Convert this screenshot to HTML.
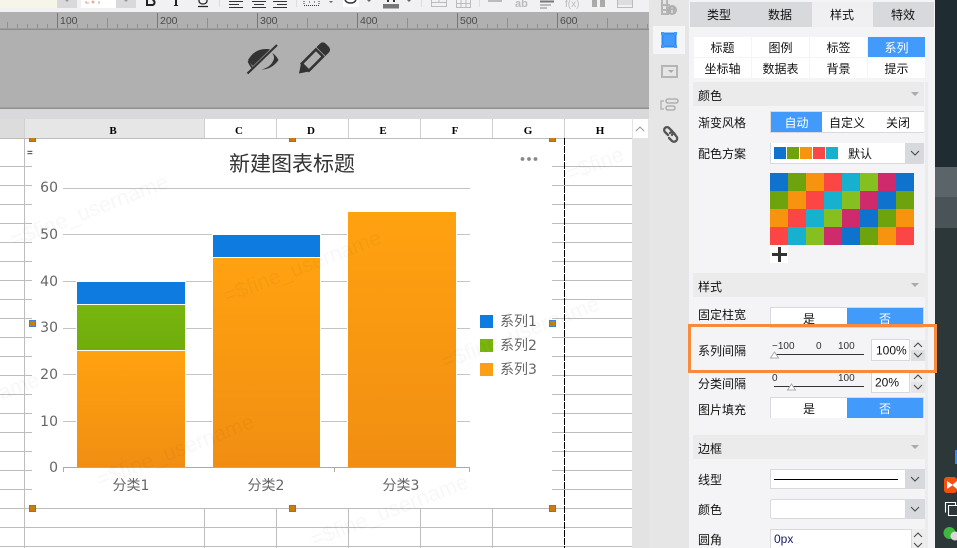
<!DOCTYPE html>
<html><head><meta charset="utf-8"><style>
html,body{margin:0;padding:0;width:957px;height:548px;overflow:hidden;background:#fff}
svg{display:block}
text{font-family:"Liberation Sans","Noto Sans CJK SC",sans-serif}
.c{font-family:"DejaVu Sans","Noto Sans CJK SC",sans-serif;fill:#666}
.p{font-size:12px;fill:#111}
.m{text-anchor:middle}
.h{font-family:"Liberation Serif",serif;font-size:11px;text-anchor:middle;fill:#000;font-weight:bold}
.r{font-family:"Liberation Sans",sans-serif;font-size:10.5px;fill:#4a4a4a}
.s{font-family:"Liberation Sans",sans-serif;font-size:10px;fill:#333}
.w{font-size:21.5px;fill:#000;fill-opacity:.03}
</style></head><body>
<svg width="957" height="548" viewBox="0 0 957 548" xmlns="http://www.w3.org/2000/svg">
<defs>
<linearGradient id="o" x1="0" y1="0" x2="0" y2="1"><stop offset="0" stop-color="#ffa210"/><stop offset="1" stop-color="#f18e12"/></linearGradient>
<linearGradient id="g" x1="0" y1="0" x2="0" y2="1"><stop offset="0" stop-color="#78b50f"/><stop offset="1" stop-color="#6fad0c"/></linearGradient>
</defs>

<!-- toolbar -->
<rect x="0" y="0" width="650" height="12" fill="#f1f1f3"/>
<rect x="0" y="0" width="57" height="8" fill="#f6f6e8"/>
<rect x="57" y="0" width="20" height="8" fill="#d9d9db"/>
<rect x="81" y="0" width="35" height="8" fill="#fff"/>
<rect x="116" y="0" width="20" height="8" fill="#d9d9db"/>
<path d="M65 0h4l-2 2zM124 0h4l-2 2z" fill="#999"/>
<path d="M86 1v2h3M93 1a1 1 0 1 0 .1 0M99 1v3" stroke="#d9a090" fill="none"/>
<path d="M147 0v5h4.500a2.500 2.500 0 0 0 1-5" stroke="#222" stroke-width="2" fill="none"/>
<path d="M176 0v5" stroke="#222" stroke-width="2"/><path d="M174 5.500h4" stroke="#222"/>
<path d="M199 0v1a4 3 0 0 0 8 0V0M198 6.500h10" stroke="#222" stroke-width="1.300" fill="none"/>
<path d="M219.500 0v7" stroke="#ddd"/>
<path d="M229 1.500h14M229 4.500h10M229 7.500h14M252 1.500h14M254 4.500h10M252 7.500h14M273 1.500h14M277 4.500h10M273 7.500h14" stroke="#333" stroke-width="1.100" fill="none"/>
<path d="M296.500 0v7" stroke="#ddd"/>
<path d="M304 5.500h15M304 1v4M319 1v4M309 2h1M314 2h1" stroke="#333" stroke-dasharray="1 1"/>
<path d="M329 1h4l-2 2z" fill="#666"/>
<rect x="343" y="0" width="16" height="7" fill="#fff"/>
<path d="M345 0a6 5 0 0 0 11 0" stroke="#333" stroke-width="1.500" fill="none"/>
<path d="M367 0h4l-2 2zM407 0h4l-2 2z" fill="#666"/>
<path d="M388 0v2M394 0v2" stroke="#333" stroke-width="2"/>
<rect x="383" y="4" width="16" height="4.500" fill="#777"/>
<path d="M421.500 0v7M479.500 0v7" stroke="#ddd"/>
<g stroke="#bbb" fill="none"><path d="M431.500 0v6.500h15V0M431.500 2.500h15M439 0v2"/><path d="M456.500 0v7.500h14V0M456.500 3.500h14M461 0v7M466 0v7"/></g>
<path d="M488 1h14" stroke="#bbb" stroke-width="2"/>
<text x="515" y="7" font-size="11" fill="#bbb" font-weight="bold">ab</text>
<path d="M540 1.500h14" stroke="#777" stroke-width="2"/><path d="M540 5h11M540 8h7" stroke="#bbb" stroke-width="2"/>
<text x="565" y="7" font-size="10" fill="#bbb">f(x)</text>
<path d="M592 0h5v7h-5zM600 0h5v7h-5z" fill="#aaa"/>
<path d="M617.500 0v7.500h15V0" stroke="#bbb" fill="none"/><path d="M618 0h14v5h-14z" fill="#ddd"/>

<!-- ruler and gray band -->
<rect x="0" y="12" width="649" height="96" fill="#b0b0b0"/>
<rect x="0" y="28.500" width="649" height="1.500" fill="#8c8c8c"/>
<rect x="0" y="107.500" width="649" height="1.500" fill="#919191"/>
<path d="M7.500 22v6M17.500 24v4M27.500 24v4M37.500 24v4M47.500 24v4M67.500 24v4M77.500 24v4M87.500 24v4M97.500 24v4M107.500 18v10M117.500 24v4M127.500 24v4M137.500 24v4M147.500 24v4M167.500 24v4M177.500 24v4M187.500 24v4M197.500 24v4M207.500 18v10M217.500 24v4M227.500 24v4M237.500 24v4M247.500 24v4M267.500 24v4M277.500 24v4M287.500 24v4M297.500 24v4M307.500 18v10M317.500 24v4M327.500 24v4M337.500 24v4M347.500 24v4M367.500 24v4M377.500 24v4M387.500 24v4M397.500 24v4M407.500 18v10M417.500 24v4M427.500 24v4M437.500 24v4M447.500 24v4M467.500 24v4M477.500 24v4M487.500 24v4M497.500 24v4M507.500 18v10M517.500 24v4M527.500 24v4M537.500 24v4M547.500 24v4M567.500 24v4M577.500 24v4M587.500 24v4M597.500 24v4M607.500 18v10M617.500 24v4M627.500 24v4M637.500 24v4M647.500 24v4" stroke="#8f8f8f" fill="none"/>
<path d="M57.500 13v15M157.500 13v15M257.500 13v15M357.500 13v15M457.500 13v15M557.500 13v15" stroke="#777" fill="none"/>
<text class="r" x="60" y="24">100</text><text class="r" x="160" y="24">200</text><text class="r" x="260" y="24">300</text><text class="r" x="360" y="24">400</text><text class="r" x="460" y="24">500</text><text class="r" x="560" y="24">600</text>

<!-- eye-off icon -->
<path d="M248 60C252 53 258 49 266 49c1.500 0 3 .2 4 .5L253 66c-2-2-4-4-5-6z" fill="#333"/>
<path d="M248.500 61c1 3 3 6 5 8" fill="none" stroke="#333" stroke-width="1.800"/>
<path d="M272 53c3 1.500 5 4 6.500 7-4 6-10 9.500-17 9.500 6-1.500 11-5 12.500-11 .3-2-.5-4-2-5.500z" fill="#333"/>
<path d="M247.500 73.500L277 45" stroke="#333" stroke-width="2.200" fill="none"/>
<!-- pencil icon -->
<g transform="translate(299 73.500) rotate(-45)">
<path d="M0 0L9-6V6Z" fill="#333"/>
<rect x="9" y="-5" width="20" height="10" fill="none" stroke="#333" stroke-width="2.600"/>
<path d="M31-6.300h5a4 4 0 0 1 4 4v4.600a4 4 0 0 1-4 4h-5z" fill="#333"/>
</g>

<!-- sheet grid -->
<rect x="632" y="119" width="18" height="429" fill="#e3e3e3"/>
<path d="M0 138.500h632M0 166.500h632M0 185.500h632M0 204.500h632M0 223.500h632M0 242.500h632M0 261.500h632M0 280.500h632M0 299.500h632M0 318.500h632M0 337.500h632M0 356.500h632M0 375.500h632M0 394.500h632M0 413.500h632M0 432.500h632M0 451.500h632M0 470.500h632M0 489.500h632M0 508.500h632M0 527.500h632M0 546.500h632" stroke="#bdbdbd" fill="none"/>
<path d="M24.500 138v410" stroke="#bdbdbd"/>
<!-- chart bg -->
<rect x="32" y="139" width="520" height="369" fill="#fff"/>
<path d="M204.500 508v40M276.500 508v40M348.500 508v40M420.500 508v40M492.500 508v40" stroke="#bdbdbd" fill="none"/>
<path d="M564.500 138v410" stroke="#000" stroke-dasharray="7 1"/>
<text x="27" y="156" font-size="10" fill="#000" font-family="Liberation Mono">=</text>

<!-- chart -->
<text x="292" y="171" font-size="21" fill="#333" class="m">新建图表标题</text>
<circle cx="522.500" cy="159" r="1.900" fill="#888"/><circle cx="529" cy="159" r="1.900" fill="#888"/><circle cx="535.500" cy="159" r="1.900" fill="#888"/>
<path d="M63 188.500h407M63 234.500h407M63 281.500h407M63 328.500h407M63 374.500h407M63 421.500h407" stroke="#c4c4c4" fill="none"/>
<g font-size="14" text-anchor="end">
<text class="c" x="58" y="192">60</text><text class="c" x="58" y="239">50</text><text class="c" x="58" y="286">40</text><text class="c" x="58" y="332">30</text><text class="c" x="58" y="379">20</text><text class="c" x="58" y="426">10</text><text class="c" x="58" y="472">0</text>
</g>
<rect x="76" y="281" width="110" height="187" fill="#fff"/><rect x="212" y="234" width="109" height="234" fill="#fff"/><rect x="347" y="211" width="110" height="257" fill="#fff"/>
<rect x="77" y="282" width="108" height="22" fill="#0e7be0"/>
<rect x="77" y="305" width="108" height="45" fill="url(#g)"/>
<rect x="77" y="351" width="108" height="116" fill="url(#o)"/>
<rect x="213" y="235" width="107" height="22" fill="#0e7be0"/>
<rect x="213" y="258" width="107" height="209" fill="url(#o)"/>
<rect x="348" y="212" width="108" height="255" fill="url(#o)"/>
<path d="M63 467.500h407M63.500 467v5M334.500 467v5M469.500 467v5" stroke="#aaa" fill="none"/>
<g font-size="14" text-anchor="middle"><text class="c" x="131" y="490">分类1</text><text class="c" x="266" y="490">分类2</text><text class="c" x="401" y="490">分类3</text></g>
<rect x="480" y="315" width="13" height="13" fill="#0e7be0"/><rect x="480" y="339" width="13" height="13" fill="#78b50f"/><rect x="480" y="363" width="13" height="13" fill="#fd9f12"/>
<g font-size="14"><text class="c" x="500" y="326">系列1</text><text class="c" x="500" y="350">系列2</text><text class="c" x="500" y="374">系列3</text></g>

<!-- handles -->
<g fill="#c97d10" stroke="#3f80d8">
<rect x="29.500" y="135.500" width="6" height="6"/><rect x="289.500" y="135.500" width="6" height="6"/><rect x="549.500" y="135.500" width="6" height="6"/>
<rect x="29.500" y="320.500" width="6" height="6"/><rect x="549.500" y="320.500" width="6" height="6"/>
<rect x="29.500" y="505.500" width="6" height="6"/><rect x="289.500" y="505.500" width="6" height="6"/><rect x="549.500" y="505.500" width="6" height="6"/>
</g>

<!-- watermarks -->
<text class="w" transform="translate(14 247) rotate(-21)">=$fine_username</text>
<text class="w" transform="translate(227 303) rotate(-21)">=$fine_username</text>
<text class="w" transform="translate(570 181) rotate(-21)">=$fine</text>
<text class="w" transform="translate(100 487) rotate(-21)">=$fine_username</text>
<text class="w" transform="translate(314 547) rotate(-21)">=$fine_username</text>
<text class="w" transform="translate(445 369) rotate(-21)">=$fine_username</text>
<text class="w" transform="translate(-115 445) rotate(-21)">=$fine_username</text>

<!-- strip + headers (over the handles) -->
<rect x="0" y="109" width="649" height="10" fill="#d9d9db"/>
<rect x="0" y="119" width="632" height="19" fill="#fff"/>
<rect x="0" y="119" width="24" height="19" fill="#dcdcdc"/>
<rect x="25" y="119" width="179" height="19" fill="#e6e6e6"/>
<path d="M24.500 119v19M204.500 119v19M276.500 119v19M348.500 119v19M420.500 119v19M492.500 119v19M564.500 119v19" stroke="#d0d0d0" fill="none"/>
<text class="h" x="113" y="134">B</text><text class="h" x="239" y="134">C</text><text class="h" x="311" y="134">D</text><text class="h" x="383" y="134">E</text><text class="h" x="455" y="134">F</text><text class="h" x="528" y="134">G</text><text class="h" x="600" y="134">H</text>
<rect x="633" y="119" width="15" height="19" fill="#fff"/>
<path d="M636 131l4-4 4 4" stroke="#999" fill="none"/>

<!-- icon bar -->
<rect x="649" y="0" width="40" height="548" fill="#e6e6e6"/>
<rect x="653" y="26" width="32" height="28" fill="#f5f5f7"/>
<g fill="none" stroke="#b5b5b5" stroke-width="2">
<path d="M662 0v14h7M662 5h8M662 10h6M667 0v14"/>
<path d="M662 66h15v11h-15z"/>
</g>
<circle cx="672" cy="10" r="5" fill="#b0b0b0"/><path d="M672 7.500v1M672 10v3" stroke="#e6e6e6" stroke-width="1.400"/>
<path d="M668 70h6l-3 3z" fill="#aaa"/>
<rect x="662.500" y="33.500" width="13" height="13" fill="#429bfb" stroke="#2f8cf5" stroke-width="2"/>
<g fill="#429bfb"><rect x="661" y="32" width="3" height="3"/><rect x="674" y="32" width="3" height="3"/><rect x="661" y="45" width="3" height="3"/><rect x="674" y="45" width="3" height="3"/></g>
<path d="M664 101h-3v8h3" fill="none" stroke="#b5b5b5" stroke-width="1.500"/>
<rect x="666" y="99" width="12" height="4" rx="2" fill="none" stroke="#b0b0b0" stroke-width="1.600"/>
<rect x="666" y="106" width="9" height="4" rx="2" fill="none" stroke="#b0b0b0" stroke-width="1.600"/>
<g fill="none" stroke="#555" stroke-width="2.300" stroke-linecap="round">
<path d="M668 135l-3-3a2.800 2.800 0 0 1 4-4l3 3a2.800 2.800 0 0 1 0 4"/>
<path d="M670 133a2.800 2.800 0 0 1 4 0l2 3a2.800 2.800 0 0 1-4 5l-3-3"/>
</g>

<!-- panel -->
<rect x="689" y="0" width="246" height="548" fill="#f4f4f6"/>
<rect x="690" y="2" width="244" height="25" fill="#d8d9dc"/>
<rect x="812" y="2" width="61" height="25" fill="#f0f0f2"/>
<text class="p m" x="719" y="19">类型</text><text class="p m" x="780" y="19">数据</text><text class="p m" x="842" y="19">样式</text><text class="p m" x="903" y="19">特效</text>
<g fill="#fff"><rect x="694" y="37" width="57" height="20"/><rect x="752" y="37" width="57" height="20"/><rect x="810" y="37" width="57" height="20"/><rect x="694" y="58" width="57" height="20"/><rect x="752" y="58" width="57" height="20"/><rect x="810" y="58" width="57" height="20"/><rect x="868" y="58" width="57" height="20"/></g>
<rect x="868" y="37" width="57" height="20" fill="#429bfb"/>
<text class="p m" x="722.500" y="52">标题</text><text class="p m" x="780.500" y="52">图例</text><text class="p m" x="838.500" y="52">标签</text><text class="m" x="896.500" y="52" font-size="12" fill="#fff">系列</text>
<text class="p m" x="722.500" y="73">坐标轴</text><text class="p m" x="780.500" y="73">数据表</text><text class="p m" x="838.500" y="73">背景</text><text class="p m" x="896.500" y="73">提示</text>
<rect x="925" y="82" width="3" height="466" fill="#ececee"/>

<!-- color section -->
<rect x="693" y="82" width="231" height="24" fill="#ebebeb"/>
<text class="p" x="698" y="100">颜色</text>
<path d="M911 92h8l-4 4z" fill="#aaa"/>
<text class="p" x="698" y="127">渐变风格</text>
<rect x="770" y="111" width="154" height="22" fill="#d8d9dc"/>
<rect x="771" y="112" width="153" height="20" fill="#fff"/>
<rect x="771" y="112" width="51" height="20" fill="#429bfb"/>
<text class="m" x="796.500" y="127" font-size="12" fill="#fff">自动</text>
<text class="p m" x="847" y="127">自定义</text><text class="p m" x="898" y="127">关闭</text>
<text class="p" x="698" y="158">配色方案</text>
<rect x="770" y="143" width="154" height="20" fill="#fff"/>
<path d="M770.500 143v20.500h153" stroke="#d8d9dc" fill="none"/>
<rect x="905" y="143" width="19" height="20" fill="#d8d9dc"/>
<path d="M911 151l4 4 4-4" stroke="#444" fill="none"/>
<rect x="774" y="147" width="12" height="12" fill="#0f72cc"/><rect x="787" y="147" width="12" height="12" fill="#6fa30e"/><rect x="800" y="147" width="12" height="12" fill="#f8930f"/><rect x="813" y="147" width="12" height="12" fill="#fc4646"/><rect x="826" y="147" width="12" height="12" fill="#17b0cf"/>
<text class="p" x="848" y="158">默认</text>

<!-- palette -->
<g>
<rect x="770" y="173" width="18" height="18" fill="#0f72cc"/><rect x="788" y="173" width="18" height="18" fill="#6fa30e"/><rect x="806" y="173" width="18" height="18" fill="#f8930f"/><rect x="824" y="173" width="18" height="18" fill="#fc4646"/><rect x="842" y="173" width="18" height="18" fill="#17b0cf"/><rect x="860" y="173" width="18" height="18" fill="#86c020"/><rect x="878" y="173" width="18" height="18" fill="#cf2a6c"/><rect x="896" y="173" width="18" height="18" fill="#0f72cc"/>
<rect x="770" y="191" width="18" height="18" fill="#6fa30e"/><rect x="788" y="191" width="18" height="18" fill="#f8930f"/><rect x="806" y="191" width="18" height="18" fill="#fc4646"/><rect x="824" y="191" width="18" height="18" fill="#17b0cf"/><rect x="842" y="191" width="18" height="18" fill="#86c020"/><rect x="860" y="191" width="18" height="18" fill="#cf2a6c"/><rect x="878" y="191" width="18" height="18" fill="#0f72cc"/><rect x="896" y="191" width="18" height="18" fill="#6fa30e"/>
<rect x="770" y="209" width="18" height="18" fill="#f8930f"/><rect x="788" y="209" width="18" height="18" fill="#fc4646"/><rect x="806" y="209" width="18" height="18" fill="#17b0cf"/><rect x="824" y="209" width="18" height="18" fill="#86c020"/><rect x="842" y="209" width="18" height="18" fill="#cf2a6c"/><rect x="860" y="209" width="18" height="18" fill="#0f72cc"/><rect x="878" y="209" width="18" height="18" fill="#6fa30e"/><rect x="896" y="209" width="18" height="18" fill="#f8930f"/>
<rect x="770" y="227" width="18" height="18" fill="#fc4646"/><rect x="788" y="227" width="18" height="18" fill="#17b0cf"/><rect x="806" y="227" width="18" height="18" fill="#86c020"/><rect x="824" y="227" width="18" height="18" fill="#cf2a6c"/><rect x="842" y="227" width="18" height="18" fill="#0f72cc"/><rect x="860" y="227" width="18" height="18" fill="#6fa30e"/><rect x="878" y="227" width="18" height="18" fill="#f8930f"/><rect x="896" y="227" width="18" height="18" fill="#fc4646"/>
</g>
<rect x="770" y="245" width="18" height="18" fill="#fff"/>
<path d="M772 254.500h15M779.500 247v15" stroke="#333" stroke-width="3"/>

<!-- style section -->
<rect x="693" y="273" width="232" height="24" fill="#ebebeb"/>
<text class="p" x="698" y="291">样式</text>
<path d="M911 283h8l-4 4z" fill="#aaa"/>
<text class="p" x="698" y="319">固定柱宽</text>
<rect x="770" y="307" width="154" height="21" fill="#d8d9dc"/>
<rect x="771" y="308" width="76" height="19" fill="#fff"/>
<rect x="847" y="308" width="76" height="19" fill="#429bfb"/>
<text class="p m" x="809" y="323">是</text><text class="m" x="885" y="323" font-size="12" fill="#fff">否</text>

<text class="p" x="698" y="355">系列间隔</text>
<text class="s" x="772" y="349">−100</text><text class="s" x="816" y="349">0</text><text class="s" x="838" y="349">100</text>
<path d="M774 354.500h90" stroke="#333"/>
<path d="M774.500 352l4 6h-8z" fill="#fff" stroke="#aaa"/>
<rect x="871.500" y="339.500" width="38" height="21" fill="#fff" stroke="#d8d9dc"/>
<text x="876" y="354.500" font-size="12" fill="#111">100%</text>
<rect x="911" y="340" width="14" height="10" fill="#eee"/><rect x="911" y="350" width="14" height="11" fill="#dedfe1"/>
<path d="M914 347l4-4 4 4M914 353l4 4 4-4" stroke="#444" fill="none"/>

<text class="p" x="698" y="388">分类间隔</text>
<text class="s" x="772" y="381">0</text><text class="s" x="838" y="381">100</text>
<path d="M774 386.500h90" stroke="#333"/>
<path d="M791.500 384l4 6h-8z" fill="#fff" stroke="#aaa"/>
<rect x="871.500" y="372.500" width="38" height="20" fill="#fff" stroke="#d8d9dc"/>
<text x="875" y="386.500" font-size="12" fill="#111">20%</text>
<rect x="911" y="372" width="14" height="10" fill="#eee"/><rect x="911" y="382" width="14" height="11" fill="#e6e6e8"/>
<path d="M914 379l4-4 4 4M914 385l4 4 4-4" stroke="#444" fill="none"/>

<text class="p" x="698" y="414">图片填充</text>
<rect x="770" y="397" width="154" height="21" fill="#d8d9dc"/>
<rect x="771" y="398" width="76" height="20" fill="#fff"/>
<rect x="847" y="398" width="76" height="20" fill="#429bfb"/>
<text class="p m" x="809" y="413">是</text><text class="m" x="885" y="413" font-size="12" fill="#fff">否</text>

<!-- border section -->
<rect x="693" y="435" width="232" height="24" fill="#ebebeb"/>
<text class="p" x="698" y="453">边框</text>
<path d="M911 445h8l-4 4z" fill="#aaa"/>
<text class="p" x="698" y="484">线型</text>
<rect x="770.500" y="469.500" width="135" height="19" fill="#fff" stroke="#d8d9dc"/>
<rect x="905" y="469" width="20" height="20" fill="#d8d9dc"/>
<path d="M911 477l4 4 4-4" stroke="#444" fill="none"/>
<path d="M774 479.500h124" stroke="#000"/>
<text class="p" x="698" y="514">颜色</text>
<rect x="770.500" y="499.500" width="135" height="19" rx="2" fill="#fff" stroke="#d8d9dc"/>
<rect x="905" y="499" width="20" height="20" fill="#d8d9dc"/>
<path d="M911 507l4 4 4-4" stroke="#444" fill="none"/>
<text class="p" x="698" y="544">圆角</text>
<rect x="770.500" y="529.500" width="141" height="22" fill="#fff" stroke="#d8d9dc"/>
<text x="774" y="543" font-size="12" fill="#1a1a66">0px</text>
<rect x="912" y="529" width="13" height="19" fill="#eee"/>
<path d="M914 537l4-4 4 4M914 543l4 4 4-4" stroke="#444" fill="none"/>

<!-- desktop -->
<rect x="935" y="0" width="22" height="167" fill="#1f2d33"/>
<rect x="935" y="167" width="22" height="30" fill="#5b6569"/>
<rect x="935" y="197" width="22" height="31" fill="#4a5458"/>
<rect x="935" y="228" width="22" height="320" fill="#2b3739"/>
<rect x="955" y="450" width="2" height="14" fill="#2f8cf0"/>
<rect x="944" y="477" width="13" height="16" rx="3" fill="#f4500f"/>
<path d="M947 481l6 4-6 4zM957 481l-5 4 5 4z" fill="#fff"/>
<path d="M945.500 512.500v-10h10v2.500" stroke="#fff" stroke-width="1.100" fill="none"/>
<path d="M957 505.500h-8.500v10h8.500" stroke="#fff" stroke-width="1.100" fill="none"/>
<circle cx="949.500" cy="533" r="6" fill="#3fb83f"/>
<circle cx="955" cy="536" r="4.500" fill="#d8d8d8"/>

<!-- highlight -->
<rect x="689.500" y="325.500" width="246" height="46" fill="none" stroke="#f98a3c" stroke-width="3"/>
</svg>
</body></html>
